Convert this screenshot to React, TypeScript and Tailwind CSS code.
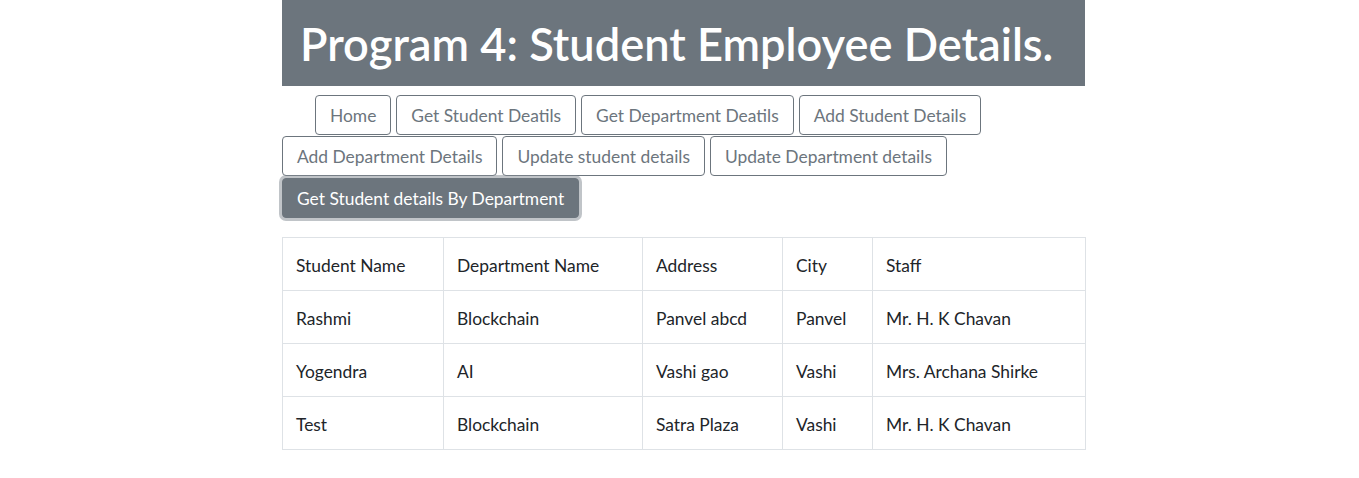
import React from "react";

const buttons = [
  "Home",
  "Get Student Deatils",
  "Get Department Deatils",
  "Add Student Details",
  "Add Department Details",
  "Update student details",
  "Update Department details",
];

const rows = [
  ["Rashmi", "Blockchain", "Panvel abcd", "Panvel", "Mr. H. K Chavan"],
  ["Yogendra", "AI", "Vashi gao", "Vashi", "Mrs. Archana Shirke"],
  ["Test", "Blockchain", "Satra Plaza", "Vashi", "Mr. H. K Chavan"],
];

const cols = ["w-[161px]", "w-[199px]", "w-[140px]", "w-[90px]", "w-[213px]"];

export default function App() {
  return (
    <div className="flex justify-center bg-white pl-[8px]" style={{ fontFamily: "Lato, 'Segoe UI', sans-serif" }}>
      <div className="w-[803px]">
        <header className="h-[86px] bg-[#6c757d] pl-[18px] pt-[17px]">
          <h1 className="text-[45.2px] font-semibold leading-[1.2] text-white">Program 4: Student Employee Details.</h1>
        </header>

        <nav className="flex flex-wrap gap-x-[5px] gap-y-[1px] pt-[9px]">
          {buttons.map((b, i) => (
            <button
              key={b}
              className={`h-[40px] rounded-[4px] border border-[#6c757d] bg-white px-[14px] pt-[3px] text-[17.4px] text-[#6c757d] ${i === 0 ? "ml-[33px]" : ""}`}
            >
              {b}
            </button>
          ))}
          <button className="mt-[1px] h-[40px] rounded-[4px] border border-[#6c757d] bg-[#6c757d] px-[14px] pt-[3px] text-[17.4px] text-white shadow-[0_0_0_3px_rgba(130,138,145,0.5)]">
            Get Student details By Department
          </button>
        </nav>

        <table className="mt-[19px] w-full table-fixed border-collapse text-[17.4px] text-[#212529]">
          <thead>
            <tr>
              {["Student Name", "Department Name", "Address", "City", "Staff"].map((h, i) => (
                <th key={h} className={`${cols[i]} h-[53px] border border-[#dee2e6] px-[13px] pt-[4px] text-left font-normal`}>
                  {h}
                </th>
              ))}
            </tr>
          </thead>
          <tbody>
            {rows.map((r, ri) => (
              <tr key={ri}>
                {r.map((c, ci) => (
                  <td key={ci} className="h-[53px] border border-[#dee2e6] px-[13px] pt-[4px]">
                    {c}
                  </td>
                ))}
              </tr>
            ))}
          </tbody>
        </table>
      </div>
    </div>
  );
}
